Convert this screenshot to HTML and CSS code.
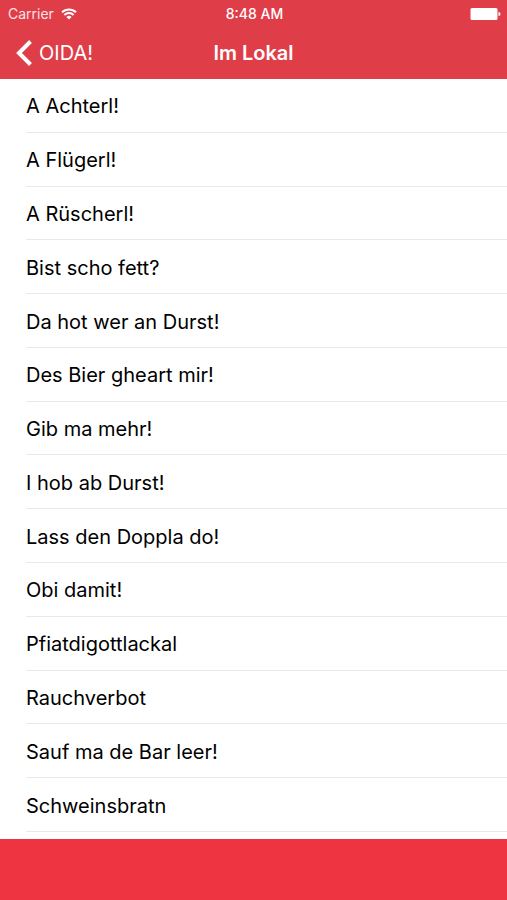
FILE: index.html
```html
<!DOCTYPE html>
<html lang="de">
<head>
<meta charset="utf-8">
<meta name="viewport" content="width=device-width, initial-scale=1">
<title>Im Lokal</title>
<link rel="stylesheet" href="styles.css">
</head>
<body>
<header class="header">
  <div class="status">
    <div class="carrier">
      <span>Carrier</span>
      <svg class="wifi" viewBox="0 0 16 12" aria-hidden="true">
        <path d="M1 4.3a10 10 0 0 1 14 0M3.4 7a6.4 6.4 0 0 1 9.2 0"/>
        <path class="dot" d="M5.4 9a3.6 3.6 0 0 1 5.2 0L8 11.6z"/>
      </svg>
    </div>
    <span class="time">8:48 AM</span>
    <svg class="battery" viewBox="0 0 31 12" aria-hidden="true">
      <rect x="0.5" y="0" width="27" height="12" rx="1.5"/>
      <path d="M28.5 4a2 2 0 0 1 0 4z"/>
    </svg>
  </div>
  <nav class="nav">
    <a class="back" href="#">
      <svg class="chevron" viewBox="0 0 16 26" aria-hidden="true"><path d="M14.5 1.5 3 13l11.500 11.500"/></svg>
      <span>OIDA!</span>
    </a>
    <h1 class="title">Im Lokal</h1>
  </nav>
</header>
<main class="content">
  <ul class="list">
    <li class="row">A Achterl!</li>
    <li class="row">A Flügerl!</li>
    <li class="row">A Rüscherl!</li>
    <li class="row">Bist scho fett?</li>
    <li class="row">Da hot wer an Durst!</li>
    <li class="row">Des Bier gheart mir!</li>
    <li class="row">Gib ma mehr!</li>
    <li class="row">I hob ab Durst!</li>
    <li class="row">Lass den Doppla do!</li>
    <li class="row">Obi damit!</li>
    <li class="row">Pfiatdigottlackal</li>
    <li class="row">Rauchverbot</li>
    <li class="row">Sauf ma de Bar leer!</li>
    <li class="row">Schweinsbratn</li>
  </ul>
</main>
<footer class="footer"></footer>
</body>
</html>
```

FILE: styles.css
```css
* { box-sizing: border-box; }
body {
  margin: 0;
  height: 100vh;
  display: flex;
  flex-direction: column;
  background: #fff;
  color: #000;
  font-family: Inter, "Liberation Sans", sans-serif;
}
.header {
  flex: none;
  background: #df3d48;
  color: #fff;
}
.status {
  display: grid;
  grid-template-columns: 1fr auto 1fr;
  align-items: center;
  height: 27px;
  padding: 0 6px 0 8px;
  font-size: 14px;
}
.carrier { display: flex; align-items: center; gap: 7px; color: #fbe3e5; }
.wifi { width: 16px; height: 12px; fill: none; stroke: #fff; stroke-width: 2; }
.wifi .dot { fill: #fff; stroke: none; }
.time { font-weight: 500; }
.battery { width: 31px; height: 12px; fill: #fff; justify-self: end; }
.nav {
  display: grid;
  grid-template-columns: 1fr auto 1fr;
  align-items: center;
  height: 52px;
  padding: 0 16px;
}
.back {
  display: flex;
  align-items: center;
  gap: 7px;
  color: #fff;
  font-size: 20px;
  text-decoration: none;
}
.chevron { width: 16px; height: 26px; fill: none; stroke: #fff; stroke-width: 4; }
.title { margin: 0; font-size: 20px; font-weight: 600; }
.content {
  flex: 1;
  min-height: 0;
  display: grid;
  padding-bottom: 7px;
  overflow-y: auto;
}
.list {
  margin: 0;
  padding: 0 0 0 26px;
  list-style: none;
  display: grid;
  grid-auto-rows: minmax(44px, 1fr);
}
.row {
  display: flex;
  align-items: center;
  padding-top: 2px;
  border-bottom: 1px solid #e9e9eb;
  font-size: 20px;
}
.footer {
  flex: none;
  height: 61px;
  background: #ee3341;
}
```
